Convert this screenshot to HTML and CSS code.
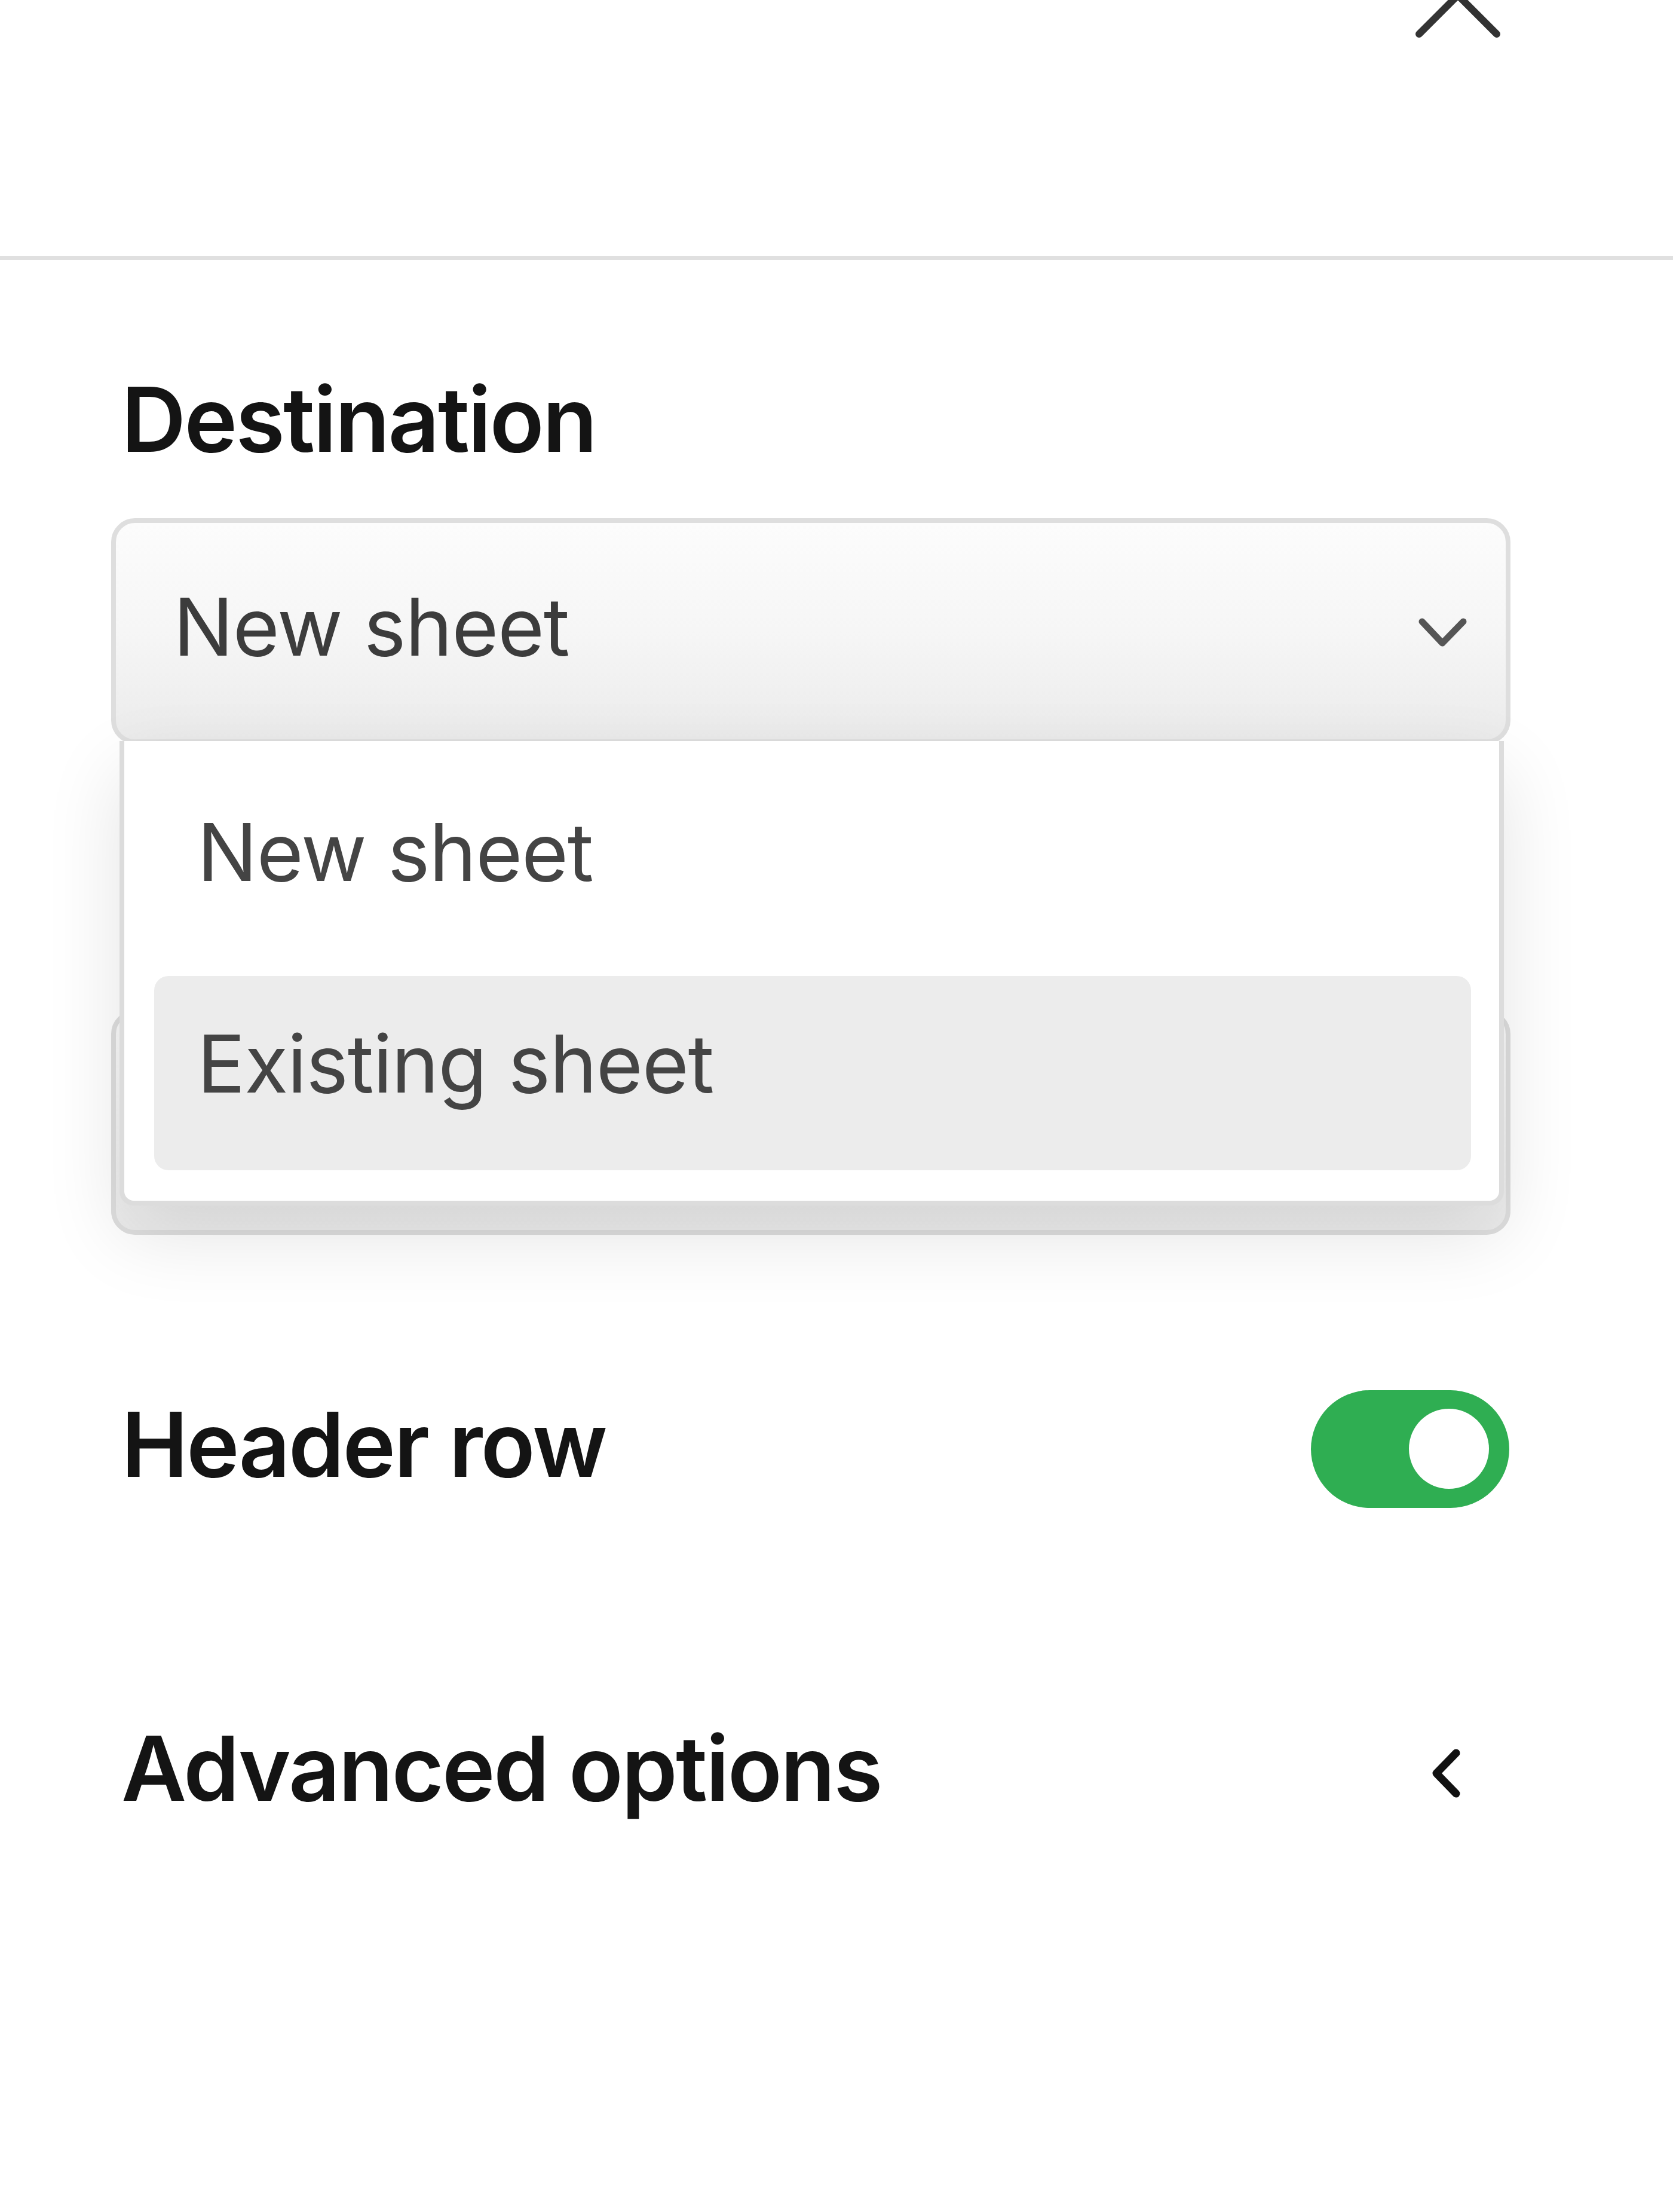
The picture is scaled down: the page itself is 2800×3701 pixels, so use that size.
FILE: index.html
```html
<!DOCTYPE html>
<html lang="en">
<head>
<meta charset="utf-8">
<title>Destination</title>
<link rel="stylesheet" href="styles.css">
</head>
<body>
<div class="panel">
  <header class="top">
    <button class="close" aria-label="Close">
      <svg width="160" height="160" viewBox="0 0 160 160"><path d="M15 15 L145 145 M145 15 L15 145" fill="none" stroke="#333" stroke-width="12" stroke-linecap="round"/></svg>
    </button>
  </header>
  <main class="content">
    <section class="field">
      <h3 class="label">Destination</h3>
      <div class="select-wrap">
        <div class="select">
          <span class="value">New sheet</span>
          <svg class="chev-down" width="90" height="60" viewBox="0 0 90 60"><path d="M10 14 L44 50 L79 14" fill="none" stroke="#555" stroke-width="11" stroke-linecap="round" stroke-linejoin="round"/></svg>
        </div>
        <ul class="menu">
          <li class="option">New sheet</li>
          <li class="option active">Existing sheet</li>
        </ul>
      </div>
      <div class="select ghost"></div>
    </section>
    <div class="row toggle-row">
      <span class="label">Header row</span>
      <span class="switch"><span class="knob"></span></span>
    </div>
    <div class="row adv-row">
      <span class="label">Advanced options</span>
      <svg class="chev-left" width="60" height="90" viewBox="0 0 60 90"><path d="M47 11 L14 45 L47 79" fill="none" stroke="#111" stroke-width="13" stroke-linecap="round" stroke-linejoin="round"/></svg>
    </div>
  </main>
</div>
</body>
</html>
```

FILE: styles.css
```css
html, body {
  margin: 0;
  padding: 0;
  background: #ffffff;
}

body {
  font-family: "Inter", "Liberation Sans", sans-serif;
  color: #111;
}

.panel {
  width: 2800px;
}

.top {
  height: 428px;
  border-bottom: 7px solid #e0e0e0;
  display: flex;
  justify-content: flex-end;
  align-items: flex-start;
  padding-right: 280px;
  overflow: hidden;
}

.close {
  margin: -88px 0 0 0;
  padding: 0;
  border: 0;
  background: none;
  display: block;
}

.close svg {
  display: block;
}

.content {
  padding: 177px 272px 0 186px;
}

.label {
  margin: 0;
  font-size: 150px;
  line-height: 180px;
  font-weight: 600;
  letter-spacing: -2.8px;
  color: #141414;
  padding-left: 17px;
}

.field .label {
  margin-bottom: 75px;
}

.select-wrap {
  position: relative;
  z-index: 2;
}

.select {
  box-sizing: border-box;
  height: 378px;
  border: 8px solid #dedede;
  border-radius: 40px;
  background: linear-gradient(#fcfcfc, #f6f6f6 50%, #ebebeb);
  display: flex;
  align-items: center;
  justify-content: space-between;
  padding: 0 60px 16px 96px;
}

.value {
  font-size: 134px;
  line-height: 160px;
  letter-spacing: -1.3px;
  color: #3c3c3c;
}

.chev-down {
  display: block;
  margin-top: 16px;
}

.menu {
  position: absolute;
  top: 373px;
  left: 14px;
  right: 11px;
  margin: 0;
  list-style: none;
  background: #ffffff;
  border: 8px solid #dcdcdc;
  border-top: 0;
  border-radius: 0 0 24px 24px;
  padding: 39px 47px 51px 50px;
  display: flex;
  flex-direction: column;
  gap: 29px;
  box-shadow: 0 50px 130px rgba(0, 0, 0, 0.11);
}

.option {
  box-sizing: border-box;
  height: 325px;
  display: flex;
  align-items: center;
  padding: 0 0 34px 72px;
  border-radius: 24px;
  font-size: 134px;
  line-height: 160px;
  letter-spacing: -1.3px;
  color: #444;
}

.option.active {
  background: #ececec;
}

.ghost {
  margin-top: 445px;
  height: 376px;
  background: linear-gradient(#fafafa, #ececec);
}

.row {
  display: flex;
  justify-content: space-between;
  align-items: center;
}

.row .label {
  padding-bottom: 16px;
}

.toggle-row {
  margin-top: 260px;
  height: 197px;
}

.switch {
  position: relative;
  width: 332px;
  height: 197px;
  border-radius: 99px;
  background: #2fae52;
  margin-right: 2px;
}

.knob {
  position: absolute;
  top: 31px;
  right: 34px;
  width: 134px;
  height: 134px;
  border-radius: 50%;
  background: #ffffff;
}

.adv-row {
  margin-top: 354px;
  height: 180px;
}

.chev-left {
  display: block;
  margin-right: 78px;
}
```
